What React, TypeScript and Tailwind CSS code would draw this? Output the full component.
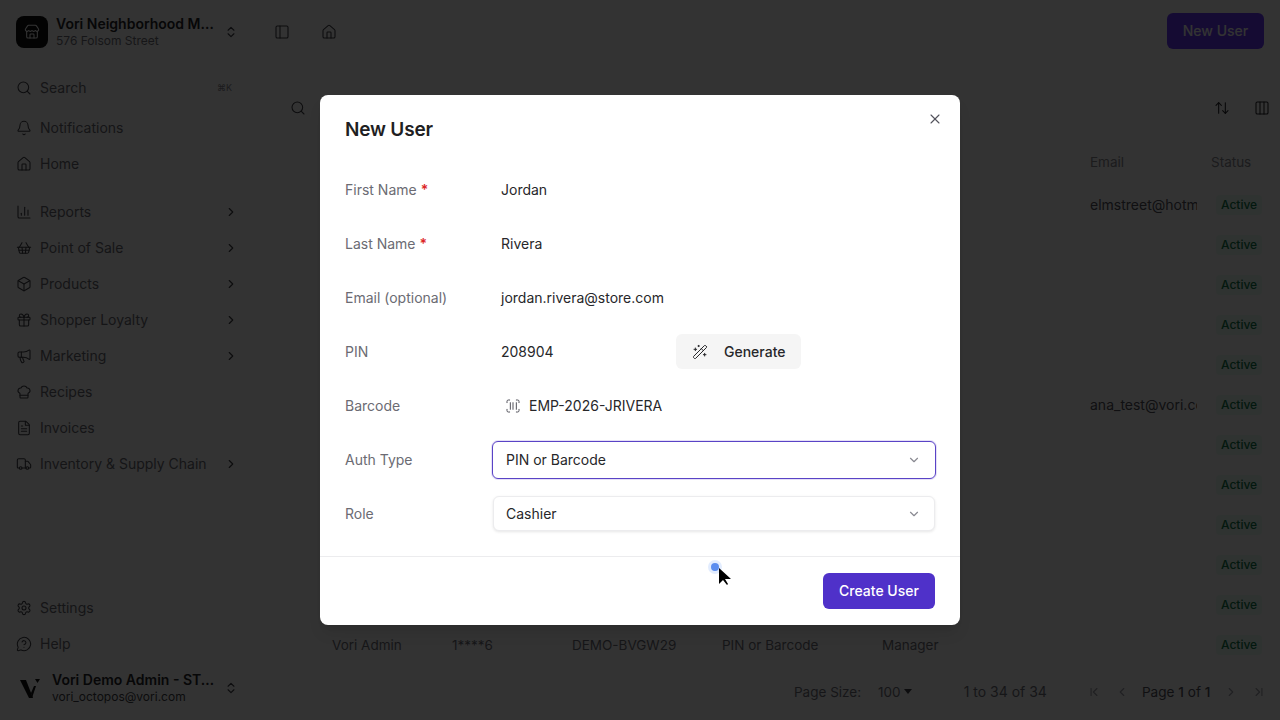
import React from 'react';
import {
  ArrowUpDown,
  Bell,
  Box,
  ChartColumn,
  ChefHat,
  ChevronDown,
  ChevronFirst,
  ChevronLast,
  ChevronLeft,
  ChevronRight,
  ChevronsUpDown,
  Columns3,
  FileText,
  Gift,
  House,
  Megaphone,
  MessageCircleQuestion,
  PanelLeft,
  ScanBarcode,
  Search,
  Settings,
  ShoppingBasket,
  Store,
  Truck,
  WandSparkles,
  X,
} from 'lucide-react';

const mainNav = [
  { label: 'Reports', icon: ChartColumn, more: true },
  { label: 'Point of Sale', icon: ShoppingBasket, more: true },
  { label: 'Products', icon: Box, more: true },
  { label: 'Shopper Loyalty', icon: Gift, more: true },
  { label: 'Marketing', icon: Megaphone, more: true },
  { label: 'Recipes', icon: ChefHat, more: false },
  { label: 'Invoices', icon: FileText, more: false },
  { label: 'Inventory & Supply Chain', icon: Truck, more: true },
];

const rows = [
  { email: 'elmstreet@hotmail.com' },
  {},
  {},
  {},
  {},
  { email: 'ana_test@vori.com' },
  {},
  {},
  {},
  {},
  {},
  { name: 'Vori Admin', pin: '1****6', barcode: 'DEMO-BVGW29', auth: 'PIN or Barcode', role: 'Manager' },
] as { name?: string; pin?: string; barcode?: string; auth?: string; role?: string; email?: string }[];

const gridCols = 'grid grid-cols-[120px_120px_150px_160px_208px_130px_1fr]';

const NavRow = ({ label, icon: Icon, more }: { label: string; icon: React.ElementType; more?: boolean }) => (
  <div className="flex h-9 items-center pl-4 pr-3">
    <Icon size={16} strokeWidth={1.6} className="text-[#3f3f46]" />
    <span className="ml-2 text-sm text-[#6b6b73]">{label}</span>
    {more && <ChevronRight size={14} strokeWidth={2} className="ml-auto text-[#3f3f46]" />}
  </div>
);

const Sidebar = () => (
  <aside className="flex h-full w-[250px] shrink-0 flex-col">
    <div className="flex h-[68px] shrink-0 items-start px-4 pt-4">
      <div className="flex h-8 w-8 shrink-0 items-center justify-center rounded-lg bg-[#111111]">
        <Store size={16} strokeWidth={1.6} className="text-white" />
      </div>
      <div className="-mt-[2px] ml-2 w-[160px] shrink-0 leading-4">
        <div className="truncate text-sm font-semibold text-[#27272a]">Vori Neighborhood Market</div>
        <div className="text-xs leading-[14px] text-[#71717a]">576 Folsom Street</div>
      </div>
      <ChevronsUpDown size={14} className="ml-2 mt-[9px] shrink-0 text-[#3f3f46]" />
    </div>
    <div className="flex h-10 shrink-0 items-center px-4">
      <Search size={16} strokeWidth={1.6} className="text-[#3f3f46]" />
      <span className="ml-2 text-sm text-[#6b6b73]">Search</span>
      <span className="ml-auto mr-[2px] text-[9px] text-[#8a8a92]">⌘K</span>
    </div>
    <div className="mt-[2px]">
      <NavRow label="Notifications" icon={Bell} />
      <NavRow label="Home" icon={House} />
    </div>
    <div className="mt-3">
      {mainNav.map((item) => (
        <NavRow key={item.label} {...item} />
      ))}
    </div>
    <div className="mt-auto">
      <NavRow label="Settings" icon={Settings} />
      <NavRow label="Help" icon={MessageCircleQuestion} />
      <div className="mb-2 mt-[2px] flex h-12 items-center pl-4">
        <svg width="28" height="24" viewBox="0 0 28 24" className="shrink-0">
          <path d="M4 4h6l7 18h-4z" fill="#111111" />
          <path d="M16 22l-1-5 3-7h2z" fill="#111111" />
          <path d="M19 3h5l-2.5 4z" fill="#111111" />
        </svg>
        <div className="-mt-[2px] ml-2 w-[163px] shrink-0 leading-4">
          <div className="truncate text-sm font-semibold text-[#27272a]">Vori Demo Admin - STORE</div>
          <div className="truncate text-xs leading-[14px] text-[#3f3f46]">vori_octopos@vori.com</div>
        </div>
        <ChevronsUpDown size={14} className="ml-[9px] shrink-0 text-[#3f3f46]" />
      </div>
    </div>
  </aside>
);

const Main = () => (
  <main className="flex h-full min-w-0 flex-1 flex-col">
    <header className="flex h-16 shrink-0 items-center pb-[2px] pl-6 pr-4">
      <PanelLeft size={16} strokeWidth={1.6} className="mt-[2px] text-[#3f3f46]" />
      <House size={16} strokeWidth={1.6} className="ml-[31px] mt-[2px] text-[#3f3f46]" />
      <button className="ml-auto h-9 w-[97px] rounded-md bg-[#6a3aff] text-sm font-medium text-white">New User</button>
    </header>
    <div className="flex h-[88px] shrink-0 items-start pl-10 pr-[10px] pt-[36px]">
      <Search size={16} strokeWidth={1.6} className="text-[#3f3f46]" />
      <ArrowUpDown size={16} strokeWidth={1.6} className="ml-auto text-[#27272a]" />
      <Columns3 size={16} strokeWidth={1.6} className="ml-6 text-[#27272a]" />
    </div>
    <div className="flex-1 pl-[82px]">
      <div className={`${gridCols} h-[33px] items-start text-[13.5px] text-[#8a8a92]`}>
        <span className="col-start-6 leading-5">Email</span>
        <span className="col-start-7 -ml-[9px] leading-5">Status</span>
      </div>
      {rows.map((row, i) => (
        <div key={i} className={`${gridCols} h-10 items-center text-[13.5px] text-[#71717a]`}>
          <span>{row.name}</span>
          <span>{row.pin}</span>
          <span>{row.barcode}</span>
          <span>{row.auth}</span>
          <span>{row.role}</span>
          <span className="-mt-[2px] w-[107px] overflow-hidden whitespace-nowrap text-[14px] text-[#52525b]">{row.email}</span>
          <span className="-ml-[4px] w-fit rounded bg-[#ecfdf3] px-[5px] py-[2px] text-xs font-medium text-[#0f7a4d]">
            Active
          </span>
        </div>
      ))}
    </div>
    <footer className="flex h-[55px] shrink-0 items-start pl-[544px] pt-[17px] text-[13.5px] text-[#71717a]">
      <span className="leading-5">Page Size:</span>
      <span className="ml-[17px] leading-5">100</span>
      <span className="ml-[3px] mt-[7px] h-0 w-0 border-x-[4px] border-t-[5px] border-x-transparent border-t-[#3f3f46]" />
      <span className="ml-[52px] text-sm leading-5">1 to 34 of 34</span>
      <ChevronFirst size={14} className="ml-[40px] mt-[3px] text-[#a1a1aa]" />
      <ChevronLeft size={14} className="ml-[14px] mt-[3px] text-[#a1a1aa]" />
      <span className="ml-[13px] text-[13.6px] leading-5 text-[#52525b]">
        Page <span className="font-medium">1</span> of <span className="font-medium">1</span>
      </span>
      <ChevronRight size={14} className="ml-[14px] mt-[3px] text-[#a1a1aa]" />
      <ChevronLast size={14} className="ml-[14px] mt-[3px] text-[#a1a1aa]" />
    </footer>
  </main>
);

const Field = ({ label, required, children }: { label: string; required?: boolean; children: React.ReactNode }) => (
  <div className="flex h-[54px] items-center">
    <div className="w-[147px] shrink-0 text-sm text-[#6b6b73]">
      {label}
      {required && <span className="ml-1 font-semibold text-[#dc2626]">*</span>}
    </div>
    {children}
  </div>
);

const Select = ({ value, focused }: { value: string; focused?: boolean }) => (
  <div
    className={
      focused
        ? 'flex h-[38px] w-[444px] items-center justify-between rounded-md border border-[#5a43c6] bg-white pl-[13px] pr-[14px] shadow-[0_0_0_1px_rgba(79,49,201,0.15)]'
        : 'mb-[1px] ml-[1px] flex h-[35px] w-[442px] items-center justify-between rounded-md border border-[#ececee] bg-white pl-[12px] pr-[13px] shadow-[0_1px_3px_rgba(0,0,0,0.1)]'
    }
  >
    <span className="text-sm text-[#27272a]">{value}</span>
    <ChevronDown size={14} className="text-[#8a8a92]" />
  </div>
);

const Dialog = () => (
  <div className="absolute left-[320px] top-[95px] flex h-[530px] w-[640px] flex-col rounded-lg bg-white shadow-lg">
    <div className="relative h-[68px] shrink-0 px-[25px] pt-[21px]">
      <h2 className="text-[19px] font-semibold leading-7 tracking-[-0.01em] text-[#1f1f23]">New User</h2>
      <X size={16} strokeWidth={1.6} className="absolute right-[17px] top-4 text-[#52525b]" />
    </div>
    <div className="flex-1 pl-[25px]">
      <Field label="First Name" required>
        <span className="ml-[9px] text-sm text-[#27272a]">Jordan</span>
      </Field>
      <Field label="Last Name" required>
        <span className="ml-[9px] text-sm text-[#27272a]">Rivera</span>
      </Field>
      <Field label="Email (optional)">
        <span className="ml-[9px] text-sm text-[#27272a]">jordan.rivera@store.com</span>
      </Field>
      <Field label="PIN">
        <span className="ml-[9px] w-[175px] text-sm text-[#27272a]">208904</span>
        <button className="mb-[2px] flex h-[35px] w-[125px] items-center rounded-md bg-[#f5f5f5] pl-4 pt-[1px] text-sm font-medium text-[#27272a]">
          <WandSparkles size={16} strokeWidth={1.5} />
          <span className="ml-4">Generate</span>
        </button>
      </Field>
      <Field label="Barcode">
        <ScanBarcode size={16} strokeWidth={1.5} className="ml-[13px] text-[#52525b]" />
        <span className="ml-2 text-sm text-[#27272a]">EMP-2026-JRIVERA</span>
      </Field>
      <Field label="Auth Type">
        <Select value="PIN or Barcode" focused />
      </Field>
      <Field label="Role">
        <Select value="Cashier" />
      </Field>
    </div>
    <div className="flex h-[69px] shrink-0 items-start justify-end border-t border-[#ececee] pr-[25px] pt-4">
      <button className="h-9 w-28 rounded-md bg-[#4f31c9] text-sm font-medium text-white">Create User</button>
    </div>
  </div>
);

const Cursor = () => (
  <div className="absolute left-[708px] top-[560px]">
    <div className="h-[14px] w-[14px] rounded-full bg-[#3b82f6]/15 p-[3px]">
      <div className="h-2 w-2 rounded-full bg-[#5b8def]" />
    </div>
    <svg width="14" height="18" viewBox="0 0 14 18" className="absolute left-[10px] top-[8px]">
      <path d="M1 0v16l4-4 4 5 1-1-3-5h6z" fill="#000000" />
    </svg>
  </div>
);

export default function App() {
  return (
    <div className="relative h-[720px] w-[1280px] overflow-hidden bg-white font-['Inter',sans-serif]">
      <div className="flex h-full">
        <Sidebar />
        <Main />
      </div>
      <div className="absolute inset-0 bg-black/80" />
      <Dialog />
      <Cursor />
    </div>
  );
}
